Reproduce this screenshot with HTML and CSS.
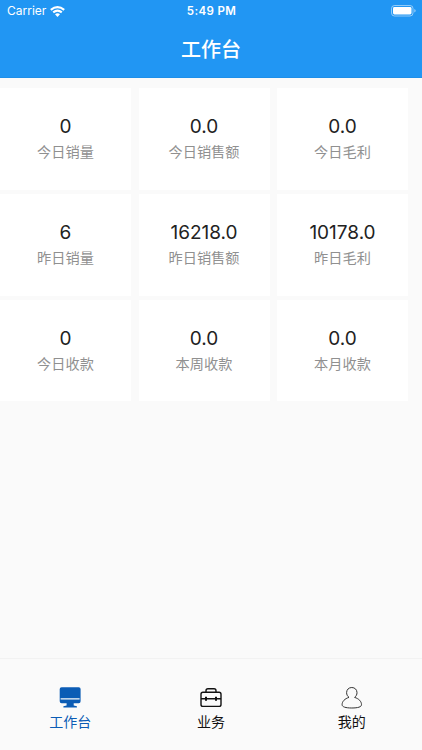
FILE: index.html
```html
<!DOCTYPE html>
<html lang="zh-CN">
<head>
<meta charset="utf-8">
<title>工作台</title>
<link rel="stylesheet" href="styles.css">
</head>
<body>
<div class="app">
  <header class="header">
    <div class="status">
      <div class="carrier"><span>Carrier</span>
        <svg class="wifi" viewBox="0 0 15 11"><path d="M.8 3.9Q7.5-1.6 14.2 3.9M3.2 6.4Q7.5 2.8 11.8 6.4" fill="none" stroke="currentColor" stroke-width="2.1"/><path d="M5 8.3Q7.5 6.3 10 8.3L7.5 10.9Z" fill="currentColor"/></svg>
      </div>
      <time class="time">5:49 PM</time>
      <svg class="battery" viewBox="0 0 25 12"><rect x=".5" y=".5" width="21.5" height="10.5" rx="3" fill="none" stroke="#fff" stroke-opacity=".5"/><rect x="2" y="2" width="18.5" height="7.5" rx="1.4" fill="#fff"/><path d="M23.4 4v3.6q1.2-.5 1.2-1.8T23.4 4Z" fill="#fff" fill-opacity=".6"/></svg>
    </div>
    <h1 class="title">工作台</h1>
  </header>
  <main class="grid">
    <section class="card"><b class="value">0</b><span class="label">今日销量</span></section>
    <section class="card"><b class="value">0.0</b><span class="label">今日销售额</span></section>
    <section class="card"><b class="value">0.0</b><span class="label">今日毛利</span></section>
    <section class="card"><b class="value">6</b><span class="label">昨日销量</span></section>
    <section class="card"><b class="value">16218.0</b><span class="label">昨日销售额</span></section>
    <section class="card"><b class="value">10178.0</b><span class="label">昨日毛利</span></section>
    <section class="card"><b class="value">0</b><span class="label">今日收款</span></section>
    <section class="card"><b class="value">0.0</b><span class="label">本周收款</span></section>
    <section class="card"><b class="value">0.0</b><span class="label">本月收款</span></section>
  </main>
  <nav class="tabs">
    <a class="tab active">
      <svg class="icon" viewBox="0 0 24 24"><path fill="currentColor" fill-rule="evenodd" d="M3.5 1.2h17.2q1.9 0 1.9 1.9v12.2q0 1.9-1.9 1.9h-5v2.2l3.2.8v1.3H5.4v-1.3l3.2-.8v-2.2h-5q-1.9 0-1.9-1.9V3.1q0-1.9 1.9-1.9ZM2.6 12.2v1.2h19v-1.2Z"/></svg>
      <span>工作台</span>
    </a>
    <a class="tab">
      <svg class="icon" viewBox="0 0 24 24" fill="none" stroke="currentColor" stroke-width="1.4"><rect x="2" y="6.2" width="20" height="14.2" rx="2"/><path d="M7 6.2V4.7Q7 2.7 9 2.7h6q2 0 2 2v1.5M2 12.7h20"/><path d="M7 10.8v4M17 10.8v4" stroke-width="2"/></svg>
      <span>业务</span>
    </a>
    <a class="tab">
      <svg class="icon" viewBox="0 0 24 24" fill="none" stroke="#333" stroke-width="1"><path d="M9 11.4C7.4 10.2 6.6 8.5 6.6 6.7c0-3 2.1-5.2 5.2-5.2S17 3.7 17 6.7c0 1.8-.8 3.5-2.4 4.7 4.3 1.3 6.9 4 6.9 7.3 0 2.2-3.5 3.3-9.7 3.3s-9.7-1.1-9.7-3.3c0-3.3 2.6-6 6.9-7.3Z"/></svg>
      <span>我的</span>
    </a>
  </nav>
</div>
</body>
</html>
```
FILE: styles.css
```css
* { box-sizing: border-box; }
body {
  margin: 0;
  font-family: Inter, "Noto Sans CJK SC", sans-serif;
  background: #fafafa;
  color: #222;
}
.app { height: 750px; display: flex; flex-direction: column; overflow: hidden; }
.header { height: 78px; flex: none; background: #2196f3; color: #fff; border-bottom: 1px solid #1e8fe9; }
.status {
  height: 22px;
  padding: 0 6px 0 7px;
  display: grid;
  grid-template-columns: 1fr auto 1fr;
  align-items: center;
  font-size: 12px;
  line-height: 22px;
}
.carrier { display: flex; align-items: center; gap: 4px; }
.wifi { width: 15px; height: 11px; }
.time { font-size: 11.5px; font-weight: 600; letter-spacing: .35px; }
.battery { width: 25px; height: 12px; justify-self: end; }
.title { margin: 0; font-size: 20px; line-height: 56px; font-weight: 500; text-align: center; }
.grid {
  flex: 1;
  padding-top: 10px;
  display: grid;
  grid-template-columns: repeat(3, 131px);
  grid-auto-rows: 101.8px;
  gap: 4px 7.5px;
  align-content: start;
}
.card { background: #fff; display: flex; flex-direction: column; align-items: center; padding-top: 25px; }
.value { font-size: 19px; line-height: 27px; font-weight: 400; }
.label { font-size: 14.2px; line-height: 24px; color: #909090; font-weight: 400; }
.tabs { height: 92px; flex: none; display: grid; grid-template-columns: repeat(3, 1fr); border-top: 1px solid #f2f2f2; }
.tab { display: flex; flex-direction: column; align-items: center; padding-top: 27px; color: #111; font-size: 14px; line-height: 24px; }
.tab.active { color: #0b5cb5; }
.icon { width: 24px; height: 24px; }
```
